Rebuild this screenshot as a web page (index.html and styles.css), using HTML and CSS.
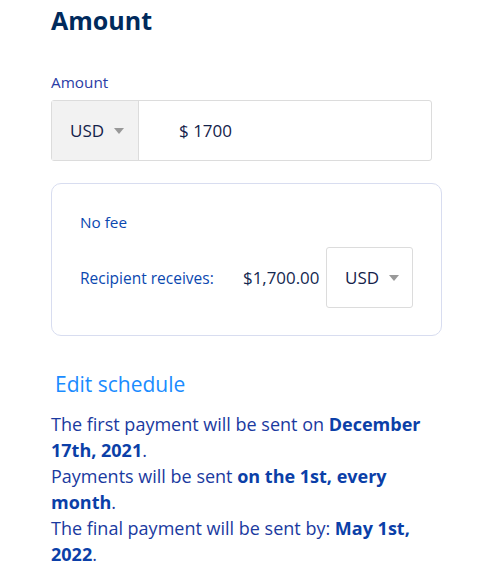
FILE: index.html
```html
<!DOCTYPE html>
<html>
<head>
<meta charset="utf-8">
<link rel="stylesheet" href="styles.css">
</head>
<body>
<div class="page">
  <h1 class="title">Amount</h1>
  <label class="field-label">Amount</label>
  <div class="input-group">
    <div class="select">USD <span class="caret"></span></div>
    <div class="amount-input">$ 1700</div>
  </div>
  <div class="card">
    <div class="fee">No fee</div>
    <div class="receive-row">
      <span class="receive-label">Recipient receives:</span>
      <span class="receive-value">$1,700.00</span>
      <div class="select select-box">USD <span class="caret"></span></div>
    </div>
  </div>
  <a class="edit-link">Edit schedule</a>
  <p class="schedule">The first payment will be sent on <b>December 17th, 2021</b>.<br>Payments will be sent <b>on the 1st, every month</b>.<br>The final payment will be sent by: <b>May 1st, 2022</b>.</p>
</div>
</body>
</html>
```
FILE: styles.css
```css
html, body { margin: 0; padding: 0; background: #fff; }
body { font-family: "Open Sans", "Noto Sans", sans-serif; }
.page { width: 391px; padding: 0 0 0 51px; }
.title { margin: 0; padding-top: 4px; font-size: 25px; line-height: 32px; font-weight: 700; color: #002a5c; }
.field-label { display: block; margin-top: 37px; font-size: 15.3px; line-height: 18px; color: #2a3ca6; }
.input-group { display: flex; width: 381px; height: 61px; margin-top: 9px; border: 1px solid #dcdcdc; border-radius: 3px; box-sizing: border-box; }
.select { display: flex; align-items: center; gap: 10px; font-size: 17px; color: #14224a; }
.input-group .select { width: 87px; background: #f2f2f2; border-right: 1px solid #dcdcdc; padding-left: 18px; box-sizing: border-box; }
.caret { width: 0; height: 0; border-left: 5px solid transparent; border-right: 5px solid transparent; border-top: 6px solid #999; }
.amount-input { display: flex; align-items: center; padding-left: 40px; font-size: 17px; color: #14224a; }
.card { margin-top: 22px; border: 1px solid #d8ddf0; border-radius: 10px; padding: 27px 28px 28px 28px; height: 153px; box-sizing: border-box; }
.fee { font-size: 15.3px; line-height: 22px; color: #0a48b0; }
.receive-row { display: flex; align-items: center; margin-top: 14px; }
.receive-label { font-size: 15.5px; color: #0a48b0; width: 163px; }
.receive-value { font-size: 16.9px; color: #142850; width: 83px; }
.select-box { width: 87px; height: 61px; border: 1px solid #dcdcdc; border-radius: 3px; box-sizing: border-box; padding-left: 18px; }
.edit-link { display: block; margin-top: 35px; margin-left: 4px; font-size: 21px; line-height: 26px; color: #1a8cff; }
.schedule { margin: 14px 0 0 0; font-size: 18px; line-height: 26px; color: #1a3aa0; }
.schedule b { color: #0b3fa8; }
```
